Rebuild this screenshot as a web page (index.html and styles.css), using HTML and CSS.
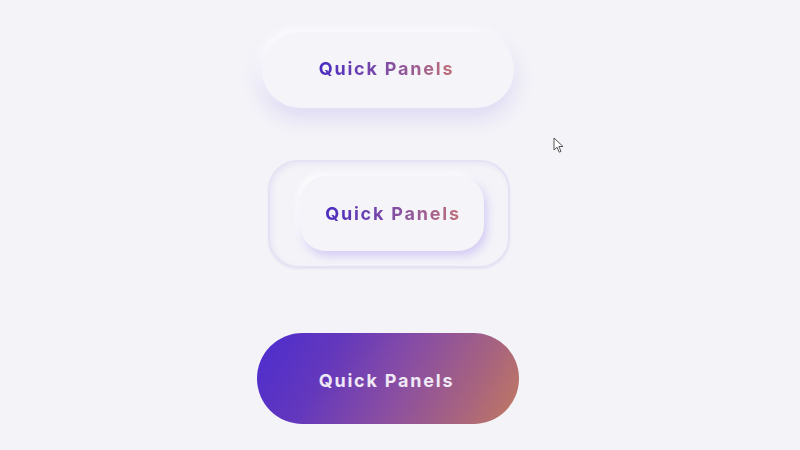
FILE: index.html
```html
<!DOCTYPE html>
<html lang="en">
<head>
<meta charset="utf-8">
<title>Quick Panels</title>
<link rel="stylesheet" href="styles.css">
</head>
<body>
<main class="stage">
  <button class="btn btn-soft"><span class="label">Quick Panels</span></button>
  <div class="frame">
    <button class="btn btn-inner"><span class="label">Quick Panels</span></button>
  </div>
  <button class="btn btn-gradient"><span class="label-light">Quick Panels</span></button>
</main>
<svg class="cursor" width="12" height="17" viewBox="0 0 12 17">
  <path d="M1 1 L1 13 L4 10.2 L6.2 15.2 L8 14.4 L5.9 9.5 L10 9.5 Z" fill="#fff" stroke="#555" stroke-width="1" stroke-linejoin="round"/>
</svg>
</body>
</html>
```
FILE: styles.css
```css
html, body {
  margin: 0;
  padding: 0;
  height: 100%;
}
body {
  background: #f3f3f8;
  font-family: Inter, "Noto Sans", sans-serif;
  overflow: hidden;
}
.stage {
  display: flex;
  flex-direction: column;
  align-items: center;
  padding-top: 32px;
  padding-right: 24px;
}
.btn {
  border: none;
  font-family: inherit;
  font-size: 18px;
  font-weight: 700;
  letter-spacing: 1.8px;
  display: flex;
  align-items: center;
  justify-content: center;
  cursor: pointer;
  padding: 0;
}
.label {
  background: linear-gradient(90deg, #4a2cc0 0%, #7a4aa8 45%, #c07078 100%);
  -webkit-background-clip: text;
  background-clip: text;
  color: transparent;
}
.label-light {
  color: #efe8f6;
}
.btn-soft {
  width: 252px;
  height: 76px;
  border-radius: 38px;
  background: #f5f4f9;
  padding-bottom: 3px;
  padding-right: 3px;
  box-shadow: 0 10px 20px rgba(160, 140, 230, 0.24), -4px -4px 10px rgba(255, 255, 255, 0.9);
}
.frame {
  margin-top: 52px;
  margin-left: 2px;
  width: 238px;
  height: 104px;
  border: 2px solid #e6e1f3;
  border-radius: 30px;
  display: flex;
  align-items: center;
  justify-content: center;
  box-shadow: inset 2px 2px 4px rgba(200, 190, 235, 0.25), 0 1px 2px rgba(200, 190, 230, 0.3);
}
.btn-inner {
  width: 184px;
  height: 75px;
  border-radius: 26px;
  background: #f5f4f9;
  margin-top: -2px;
  margin-left: 6px;
  padding-left: 2px;
  box-shadow: 3px 5px 8px rgba(165, 140, 240, 0.38), -3px -3px 6px rgba(255, 255, 255, 0.9);
}
.btn-gradient {
  margin-top: 65px;
  width: 262px;
  height: 91px;
  border-radius: 46px;
  padding-top: 3px;
  padding-right: 3px;
  background: linear-gradient(118deg, #4c2cd0 0%, #6438bc 28%, #8a4ea2 55%, #a8647e 80%, #c27a60 100%);
}
.cursor {
  position: absolute;
  left: 553px;
  top: 137px;
}
```
